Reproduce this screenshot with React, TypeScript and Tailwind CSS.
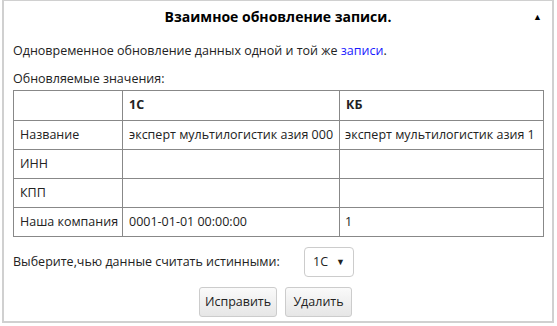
export default function App() {
  const rows = [
    { label: "Название", a: "эксперт мультилогистик азия 000", b: "эксперт мультилогистик азия 1" },
    { label: "ИНН", a: "", b: "" },
    { label: "КПП", a: "", b: "" },
    { label: "Наша компания", a: "0001-01-01 00:00:00", b: "1" },
  ]

  return (
    <div className="w-[557px] h-[326px] bg-white text-[12.5px] text-[#222]" style={{ fontFamily: '"Open Sans", "Noto Sans", sans-serif' }}>
      <div className="ml-[2px] w-[552px] h-[323px] border-2 border-t border-[#d0d0d0] flex flex-col">
        {/* Header */}
        <div className="relative h-[31px] flex items-center justify-center">
          <span className="font-bold text-[14px] text-black">Взаимное обновление записи.</span>
          <span className="absolute right-[10px] top-[9px] text-[9px] text-black">▲</span>
        </div>

        <div className="px-[9px]">
          <p className="mt-[10px] leading-[18px]">
            Одновременное обновление данных одной и той же <span className="text-[#1a1aff]">записи</span>.
          </p>
          <p className="mt-[10px] leading-[18px]">Обновляемые значения:</p>

          <table className="mt-[2px] w-[531px] table-fixed border-collapse border border-[#333]">
            <colgroup>
              <col className="w-[109px]" />
              <col className="w-[217px]" />
              <col />
            </colgroup>
            <tbody>
              <tr className="h-[30px]">
                <td className="border border-[#888]"></td>
                <td className="border border-[#888] px-[6px] font-bold">1С</td>
                <td className="border border-[#888] px-[6px] font-bold">КБ</td>
              </tr>
              {rows.map((r) => (
                <tr key={r.label} className="h-[29px]">
                  <td className="border border-[#888] px-[6px] whitespace-nowrap">{r.label}</td>
                  <td className="border border-[#888] px-[6px] whitespace-nowrap">{r.a}</td>
                  <td className="border border-[#888] px-[5px] whitespace-nowrap">{r.b}</td>
                </tr>
              ))}
            </tbody>
          </table>

          <div className="mt-[10px] flex items-center">
            <span>Выберите,чью данные считать истинными:</span>
            <div className="ml-auto mr-[189px] w-[50px] h-[30px] border border-[#ccc] rounded-[4px] flex items-center justify-center gap-[8px]">
              <span>1С</span>
              <span className="text-[9px]">▼</span>
            </div>
          </div>

          <div className="mt-[10px] flex gap-[8px] ml-[186px]">
            <button className="h-[30px] w-[78px] border border-[#ccc] rounded-[3px] bg-gradient-to-b from-[#fafafa] to-[#e6e6e6]">Исправить</button>
            <button className="h-[30px] w-[67px] border border-[#ccc] rounded-[3px] bg-gradient-to-b from-[#fafafa] to-[#e6e6e6]">Удалить</button>
          </div>
        </div>
      </div>
    </div>
  )
}
